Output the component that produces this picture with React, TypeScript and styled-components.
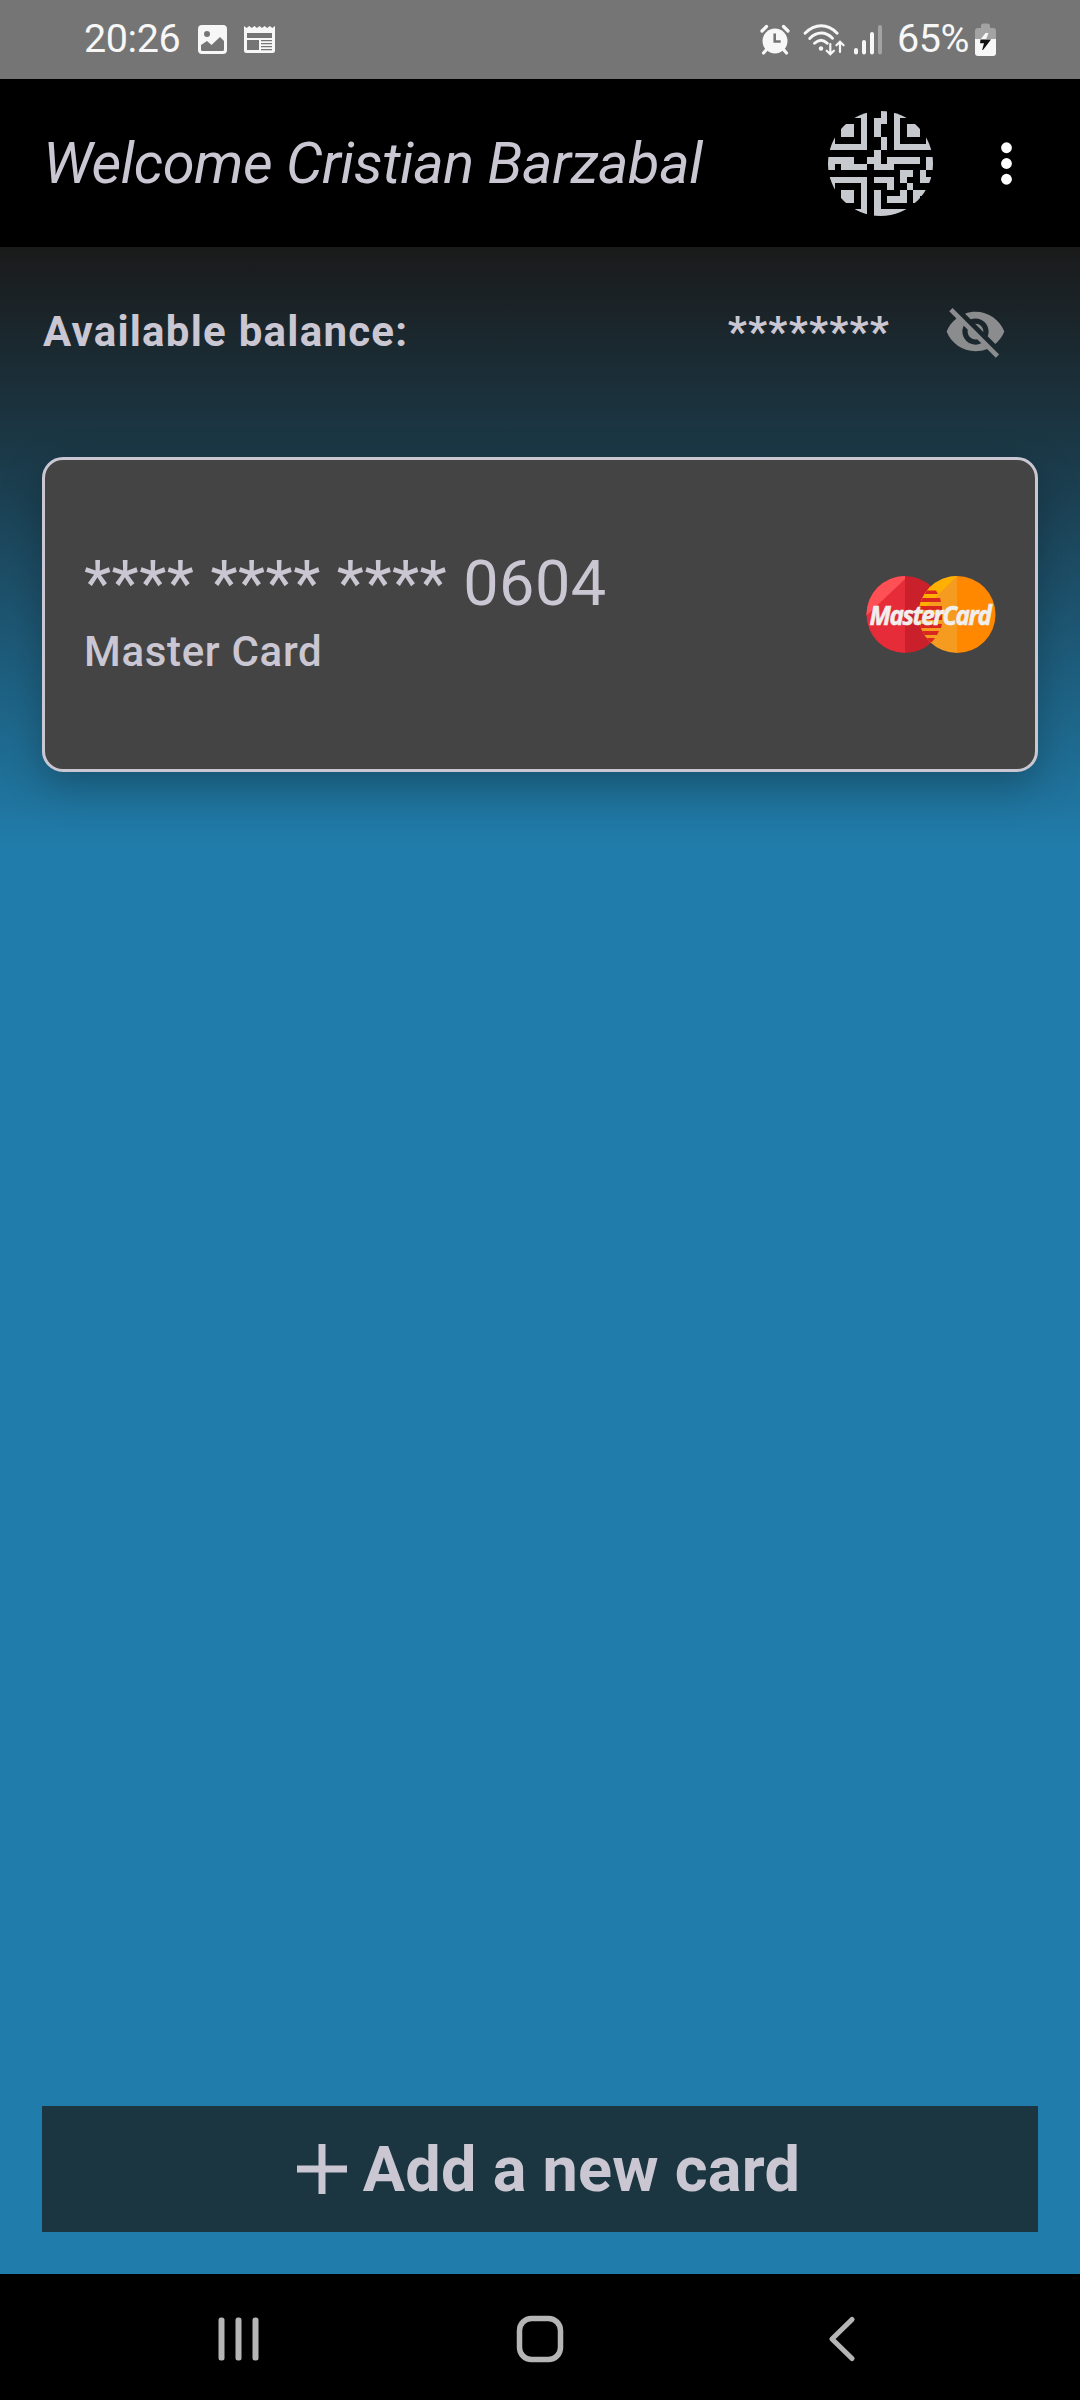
import React from "react";
import styled, { createGlobalStyle } from "styled-components";

const GlobalStyle = createGlobalStyle`
  html, body { margin: 0; padding: 0; background: #000; }
  * { box-sizing: border-box; }
`;

const ink = "#cac7d3";

const Screen = styled.div`
  width: 1080px;
  height: 2400px;
  display: flex;
  flex-direction: column;
  overflow: hidden;
  font-family: Roboto, "Noto Sans", sans-serif;
  color: ${ink};
`;

const StatusBar = styled.div`
  height: 79px;
  flex: none;
  padding: 0 84px 0 84px;
  display: flex;
  align-items: center;
  justify-content: space-between;
  background: #757575;
`;

const StatusGroup = styled.div`
  height: 79px;
  display: flex;
  align-items: center;
`;

const StatusText = styled.span<{ $width: number; $ml?: number }>`
  width: ${(p) => p.$width}px;
  margin-left: ${(p) => p.$ml ?? 0}px;
  font-size: 39.5px;
  letter-spacing: -0.4px;
  line-height: 77px;
  height: 79px;
  color: #f7f7f7;
  white-space: nowrap;
`;

const Icon = styled.svg<{ $ml?: number }>`
  display: block;
  flex: none;
  margin-left: ${(p) => p.$ml ?? 0}px;
  overflow: visible;
`;

const Header = styled.header`
  height: 168px;
  flex: none;
  padding: 0 42px 0 43px;
  display: flex;
  align-items: center;
  background: #000;
`;

const Title = styled.h1`
  margin: 0;
  flex: 1;
  font-size: 57.75px;
  line-height: 68px;
  font-weight: 400;
  font-style: italic;
  letter-spacing: -0.43px;
  white-space: nowrap;
`;

const IconButton = styled.button<{ $ml: number }>`
  margin: 0 0 0 ${(p) => p.$ml}px;
  padding: 0;
  border: 0;
  background: none;
  color: inherit;
  display: flex;
`;

const Content = styled.main`
  flex: 1;
  padding: 0 42px 42px;
  display: flex;
  flex-direction: column;
  background: linear-gradient(180deg, #1a1a1a 0, #1b3846 198px, #207caa 600px, #207caa 100%);
`;

const BalanceRow = styled.section`
  height: 169px;
  display: flex;
  align-items: center;
  padding: 0 31px 0 1px;
`;

const BalanceLabel = styled.span`
  flex: 1;
  font-size: 42px;
  font-weight: 700;
  letter-spacing: 1.25px;
`;

const BalanceValue = styled.span`
  font-size: 42px;
  font-weight: 700;
  letter-spacing: 1.2px;
`;

const Card = styled.article`
  margin-top: 41px;
  height: 315px;
  padding: 0 39px;
  display: flex;
  align-items: center;
  justify-content: space-between;
  background: #444;
  border: 3px solid ${ink};
  border-radius: 21px;
  box-shadow: 0 14px 40px rgba(0, 0, 0, 0.26);
`;

const CardInfo = styled.div`
  padding-bottom: 10px;
  display: flex;
  flex-direction: column;
`;

const CardNumber = styled.span`
  font-size: 63px;
  line-height: 84px;
  letter-spacing: 0.45px;
  white-space: nowrap;
`;

const CardBrand = styled.span`
  font-size: 42px;
  line-height: 52px;
  font-weight: 500;
  letter-spacing: 0.68px;
`;

const AddButton = styled.button`
  margin: auto 0 0;
  height: 126px;
  padding: 0 0 0 17px;
  border: 0;
  display: flex;
  align-items: center;
  justify-content: center;
  gap: 16px;
  background: #1b3641;
  color: ${ink};
  font-family: inherit;
  font-size: 63px;
  font-weight: 700;
  letter-spacing: 0.25px;
`;

const NavBar = styled.nav`
  height: 126px;
  flex: none;
  padding: 4px 87px 0 88px;
  display: grid;
  grid-template-columns: repeat(3, 301.5px);
  align-items: center;
  justify-items: center;
  background: #000;
`;

const avatarRows = [
  "######..#.######",
  "#....#.##.#....#",
  "#.##.#.#..#.##.#",
  "#.##.#.#..#.##.#",
  "#....#..#.#....#",
  "######..#.######",
  ".......#........",
  "####..##.#####.#",
  "#.####.###.....#",
  "...........##.#.",
  "######.###.#..##",
  "#....#...#..#...",
  "#.##.#.#...#.##.",
  "#.##.#.#.###.#..",
  "#....#.#........",
  "######.#####....",
];

const Avatar = () => (
  <Icon width="105" height="105" viewBox="0 0 16 16" shapeRendering="crispEdges">
    <clipPath id="avatar-round">
      <circle cx="8" cy="8" r="8" />
    </clipPath>
    <g clipPath="url(#avatar-round)" fill="#c6cace">
      {avatarRows.flatMap((row, y) =>
        [...row].map((cell, x) =>
          cell === "#" ? <rect key={`${x}-${y}`} x={x} y={y} width="1" height="1" /> : null
        )
      )}
    </g>
  </Icon>
);

const PictureIcon = () => (
  <Icon $ml={14} width="29" height="29" viewBox="0 0 29 29">
    <path
      fill="#f7f7f7"
      fillRule="evenodd"
      d="M4 0h21a4 4 0 0 1 4 4v21a4 4 0 0 1-4 4H4a4 4 0 0 1-4-4V4a4 4 0 0 1 4-4zM9 6a3 3 0 1 0 0 6 3 3 0 0 0 0-6zM3 20v4.500q0 1.500 1.500 1.500h20q1.500 0 1.500-1.500V16l-4-4-8.500 8L9 16z"
    />
  </Icon>
);

const NewsIcon = () => (
  <Icon $ml={17} width="31" height="29" viewBox="0 0 31 29">
    <path
      fill="#f7f7f7"
      fillRule="evenodd"
      d="M0 1l2.600 2L5.200 1l2.600 2 2.600-2L13 3l2.500-2L18 3l2.600-2 2.600 2 2.600-2 2.600 2L31 1v24.500a2.500 2.500 0 0 1-2.500 2.500h-26A2.500 2.500 0 0 1 0 25.500zM3 8v5h25V8zM3 15v10h12V15zM17 15v1.300h11V15zM17 18v1.300h11V18zM17 21v1.300h11V21zM17 24v1.300h11V24z"
    />
  </Icon>
);

const AlarmIcon = () => (
  <Icon width="30" height="31" viewBox="0 0 30 31" fill="none" strokeLinecap="round">
    <circle cx="15" cy="17" r="12.500" fill="#f7f7f7" />
    <path d="M2 7l4.500-4.500M28 7l-4.500-4.500M7 25l-3.500 4M23 25l3.500 4" stroke="#f7f7f7" strokeWidth="3.200" />
    <path d="M14.700 9.500v8h6" stroke="#757575" strokeWidth="2.600" strokeLinecap="butt" />
  </Icon>
);

const WifiIcon = () => (
  <Icon $ml={13} width="42" height="32" viewBox="0 0 42 32" fill="none" stroke="#f7f7f7" strokeLinecap="round">
    <path d="M2 9.300C12-.7 24.500-.7 34.200 9.300" strokeWidth="2.900" />
    <path d="M6.700 14.500c7.200-7.200 15.800-7.200 22.800-.3" strokeWidth="2.900" />
    <path d="M11.500 19.300c4.300-4 8.800-4 12.800 0" strokeWidth="2.900" />
    <circle cx="18" cy="24.500" r="2.200" fill="#f7f7f7" stroke="none" />
    <path d="M27.300 20v10M23.700 26.700l3.600 3.600 3.600-3.600M37 28V18M33.400 21.300L37 17.700l3.600 3.600" strokeWidth="2.200" />
  </Icon>
);

const SignalIcon = () => (
  <Icon $ml={9} width="29" height="30" viewBox="0 0 29 30" fill="#f7f7f7">
    <rect x="0" y="23" width="4" height="6.500" rx="2" />
    <rect x="8" y="15" width="4" height="14.500" rx="2" />
    <rect x="16" y="7" width="4" height="22.500" rx="2" />
    <rect x="24" y="0" width="4" height="29.500" rx="2" fill="#a3a3a3" />
  </Icon>
);

const BatteryIcon = () => (
  <Icon $ml={5} width="21" height="33" viewBox="0 0 21 33">
    <path d="M6 3a2.500 2.500 0 0 1 2.500-2.500h4A2.500 2.500 0 0 1 15 3v2h3a3 3 0 0 1 3 3v8H0V8a3 3 0 0 1 3-3h3z" fill="#a3a3a3" />
    <path d="M0 16h21v14a3 3 0 0 1-3 3H3a3 3 0 0 1-3-3z" fill="#f7f7f7" />
    <path d="M10.500 10h3L11 16.500H5.500z" fill="#f7f7f7" />
    <path d="M5.500 16.500H16L8 27h-.8l1.800-6.700H5z" fill="#111" />
  </Icon>
);

const MoreIcon = () => (
  <Icon width="63" height="63" viewBox="0 0 24 24" fill="#fff">
    <circle cx="12" cy="6" r="2.050" />
    <circle cx="12" cy="12" r="2.050" />
    <circle cx="12" cy="18" r="2.050" />
  </Icon>
);

const HiddenIcon = () => (
  <Icon width="63" height="63" viewBox="0 0 24 24" fill="#8b8c8e">
    <path d="M12 7c2.760 0 5 2.240 5 5 0 .65-.13 1.260-.36 1.830l2.920 2.920c1.510-1.260 2.700-2.890 3.430-4.750-1.730-4.390-6-7.500-11-7.500-1.400 0-2.740.25-3.980.7l2.160 2.160C10.740 7.130 11.350 7 12 7zM2 4.270l2.280 2.280.46.46C3.080 8.300 1.780 10.020 1 12c1.730 4.390 6 7.500 11 7.500 1.550 0 3.030-.3 4.380-.84l.42.42L19.730 22 21 20.730 3.270 3 2 4.270zM7.530 9.800l1.550 1.550c-.05.21-.08.43-.08.65 0 1.660 1.340 3 3 3 .22 0 .44-.03.65-.08l1.550 1.550c-.67.33-1.410.53-2.200.53-2.760 0-5-2.240-5-5 0-.79.2-1.530.53-2.200zm4.310-.78l3.150 3.150.02-.16c0-1.660-1.340-3-3-3l-.17.01z" />
  </Icon>
);

const MasterCardLogo = () => (
  <Icon width="130" height="78" viewBox="0 0 130 78">
    <clipPath id="mc-left">
      <circle cx="39" cy="38.500" r="38.500" />
    </clipPath>
    <clipPath id="mc-right">
      <circle cx="91" cy="38.500" r="38.500" />
    </clipPath>
    <g clipPath="url(#mc-left)">
      <rect width="39" height="78" fill="#e52c38" />
      <rect x="39" width="39" height="78" fill="#c9202c" />
      <path d="M0 0h39v3L0 40z" fill="#ff5055" />
    </g>
    <g clipPath="url(#mc-right)">
      <rect x="52" width="39" height="78" fill="#f59b20" />
      <rect x="91" width="39" height="78" fill="#ff8800" />
      <path d="M52 0h39L52 39z" fill="#ffb000" />
      <g fill="#d9271f">
        <path d="M58 14.500h12l2 3.500H56zM55 22h19l1 4H53zM53 30h23v4H52zM53 38h23v6H53zM53 48h23l-1 4H54zM56 55h17l-2 4H57zM59 62h10l-3 4h-6z" />
      </g>
    </g>
    <text
      x="3.500"
      y="48.500"
      textLength="121"
      lengthAdjust="spacingAndGlyphs"
      fill="#f1efed"
      stroke="#f1efed"
      strokeWidth="0.600"
      fontFamily='"Open Sans", "Noto Sans", sans-serif'
      fontSize="26.500"
      fontStyle="italic"
      fontWeight="700"
      letterSpacing="-1.500"
    >
      MasterCard
    </text>
  </Icon>
);

const PlusIcon = () => (
  <Icon width="50" height="50" viewBox="0 0 50 50" fill={ink}>
    <path d="M21.500 0h7v21.500H50v7H28.500V50h-7V28.500H0v-7h21.500z" />
  </Icon>
);

const RecentsIcon = () => (
  <Icon width="42" height="44" viewBox="0 0 42 44" fill="#b5b5b5">
    <rect x="0.500" y="0.500" width="6" height="43" rx="2.500" />
    <rect x="17.500" y="0.500" width="6" height="43" rx="2.500" />
    <rect x="34.500" y="0.500" width="6" height="43" rx="2.500" />
  </Icon>
);

const HomeIcon = () => (
  <Icon width="48" height="48" viewBox="0 0 48 48">
    <rect x="3.500" y="3.500" width="41" height="41" rx="12" fill="none" stroke="#b5b5b5" strokeWidth="5.500" />
  </Icon>
);

const BackIcon = () => (
  <Icon width="27" height="46" viewBox="0 0 27 46">
    <path d="M24 3.500L4 23l20 19.500" fill="none" stroke="#b5b5b5" strokeWidth="5.200" strokeLinejoin="round" strokeLinecap="round" />
  </Icon>
);

export default function App() {
  return (
    <Screen>
      <GlobalStyle />
      <StatusBar>
        <StatusGroup>
          <StatusText $width={100}>20:26</StatusText>
          <PictureIcon />
          <NewsIcon />
        </StatusGroup>
        <StatusGroup>
          <AlarmIcon />
          <WifiIcon />
          <SignalIcon />
          <StatusText $ml={14} $width={73}>65%</StatusText>
          <BatteryIcon />
        </StatusGroup>
      </StatusBar>
      <Header>
        <Title>Welcome Cristian Barzabal</Title>
        <Avatar />
        <IconButton $ml={42} aria-label="More options">
          <MoreIcon />
        </IconButton>
      </Header>
      <Content>
        <BalanceRow>
          <BalanceLabel>Available balance:</BalanceLabel>
          <BalanceValue>********</BalanceValue>
          <IconButton $ml={54} aria-label="Show balance">
            <HiddenIcon />
          </IconButton>
        </BalanceRow>
        <Card>
          <CardInfo>
            <CardNumber>**** **** **** 0604</CardNumber>
            <CardBrand>Master Card</CardBrand>
          </CardInfo>
          <MasterCardLogo />
        </Card>
        <AddButton>
          <PlusIcon />
          Add a new card
        </AddButton>
      </Content>
      <NavBar>
        <RecentsIcon />
        <HomeIcon />
        <BackIcon />
      </NavBar>
    </Screen>
  );
}
